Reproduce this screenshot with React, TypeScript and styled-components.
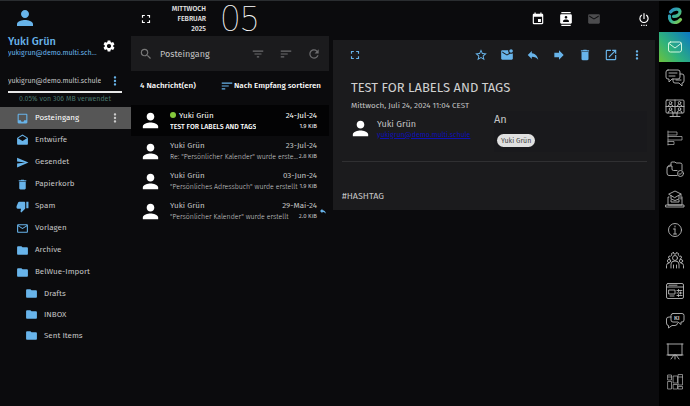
import React from "react";
import styled, { createGlobalStyle, css } from "styled-components";
import {
  MdPerson, MdSettings, MdInbox, MdDrafts, MdSend, MdDelete, MdThumbDown,
  MdMailOutline, MdFolder, MdMoreVert, MdFullscreen, MdSearch, MdFilterList,
  MdSort, MdRefresh, MdEvent, MdContacts, MdMail, MdStarBorder,
  MdMarkEmailUnread, MdReply, MdForward, MdOpenInNew, MdSettingsPower,
} from "react-icons/md";
import type { IconType } from "react-icons";

const BLUE = "#68b4ea";
const FONT = '"Fira Sans", "Noto Sans", "Open Sans", sans-serif';

const Global = createGlobalStyle`
  * { box-sizing: border-box; }
  body { margin: 0; background: #0b0b0d; color: #c4c4c4; font-family: ${FONT}; font-size: 7px; line-height: 10px; }
  button, input { font: inherit; color: inherit; }
  ul { list-style: none; margin: 0; padding: 0; }
  h1, h2, p { margin: 0; font-weight: 400; }
`;

const Page = styled.div`
  display: grid;
  grid-template-columns: 131px 1fr 31px;
  min-height: 100vh;
  border-top: 1px solid #2a2d30;
`;

const IconButton = styled.button<{ $color?: string; $size?: number }>`
  display: flex;
  align-items: center;
  justify-content: center;
  flex: none;
  padding: 0;
  border: 0;
  background: none;
  cursor: pointer;
  color: ${(p) => p.$color ?? BLUE};
  svg { width: ${(p) => p.$size ?? 14}px; height: ${(p) => p.$size ?? 14}px; }
`;

const Sidebar = styled.aside`
  min-width: 0;
`;

const Profile = styled.div`
  padding: 5px 15px 0 8px;
  color: ${BLUE};
`;

const ProfileAvatar = styled(MdPerson)`
  display: block;
  width: 24px;
  height: 24px;
  margin-left: 5px;
`;

const ProfileRow = styled.div`
  display: flex;
  align-items: center;
  justify-content: space-between;
  padding-top: 5px;
`;

const ProfileName = styled.h2`
  font-size: 11px;
  line-height: 13px;
  font-weight: 500;
`;

const Ellipsis = styled.span`
  display: block;
  min-width: 0;
  overflow: hidden;
  white-space: nowrap;
  text-overflow: ellipsis;
`;

const ProfileMail = styled(Ellipsis)`
  width: 89px;
  line-height: 9px;
`;

const Account = styled.div`
  padding: 16px 9px 0 8px;
`;

const AccountRow = styled.div`
  display: flex;
  align-items: center;
  justify-content: space-between;
  height: 16px;
`;

const Quota = styled.div`
  margin-top: 2px;
  border-top: 2px solid #e8e8e8;
  padding-top: 1px;
  text-align: center;
  color: #4a756c;
`;

const FolderList = styled.ul`
  padding-top: 3px;
`;

const FolderItem = styled.li<{ $active?: boolean; $nested?: boolean }>`
  display: flex;
  align-items: center;
  height: ${(p) => (p.$nested ? 21 : 22)}px;
  padding: 0 9px 0 ${(p) => (p.$nested ? 25 : 16)}px;
  ${(p) => p.$active && css`background: #565656; color: #fff;`}
`;

const FolderLink = styled.a`
  display: flex;
  flex: 1;
  align-items: center;
  gap: 6px;
  color: inherit;
  font-size: 8px;
  text-decoration: none;
  svg { width: 13px; height: 13px; color: ${BLUE}; }
`;

const Main = styled.main`
  display: flex;
  flex-direction: column;
  min-width: 0;
`;

const TopBar = styled.header`
  display: flex;
  align-items: center;
  height: 35px;
  padding: 0 8px;
`;

const DateText = styled.div`
  width: 53px;
  text-align: right;
  font-weight: 500;
  color: #e4e4e4;
`;

const DayNumber = styled.div`
  margin-left: 14px;
  font-size: 38px;
  line-height: 35px;
  font-weight: 100;
  color: #fff;
`;

const TopActions = styled.nav`
  display: flex;
  gap: 14px;
  margin-left: auto;
`;

const PowerButton = styled(IconButton)`
  margin-left: 36px;
`;

const Columns = styled.div`
  display: grid;
  grid-template-columns: 198px 1fr;
  gap: 4px;
  padding-right: 4px;
  flex: 1;
`;

const SearchBar = styled.form`
  display: flex;
  align-items: center;
  height: 35px;
  padding: 0 8px;
  background: #1b1b1d;
`;

const SearchInput = styled.input`
  flex: 1;
  min-width: 0;
  margin-left: 7px;
  padding: 0;
  border: 0;
  outline: 0;
  background: none;
  font-size: 9px;
`;

const SearchActions = styled.div`
  display: flex;
  gap: 14px;
`;

const ListHead = styled.div`
  display: flex;
  align-items: center;
  justify-content: space-between;
  height: 30px;
  margin-bottom: 4px;
  padding: 0 8px 0 9px;
  color: #fff;
  font-size: 8px;
  font-weight: 500;
`;

const SortButton = styled.button`
  display: flex;
  align-items: center;
  padding: 0;
  border: 0;
  background: none;
  svg { width: 14px; height: 14px; color: ${BLUE}; }
`;

const Message = styled.li<{ $selected?: boolean }>`
  display: grid;
  grid-template-columns: 19px 1fr 12px;
  align-items: center;
  height: ${(p) => (p.$selected ? 31 : 30)}px;
  padding-left: 10px;
  ${(p) => p.$selected && css`background: #030304; color: #fff;`}
`;

const Avatar = styled(MdPerson)`
  flex: none;
  width: 23px;
  height: 23px;
  margin: 0 -2px;
  color: #fff;
`;

const MessageBody = styled.div`
  min-width: 0;
  padding-left: 10px;
`;

const MessageLine = styled.div`
  display: flex;
  align-items: center;
  justify-content: space-between;
  font-size: 8px;
  line-height: 11px;
  white-space: nowrap;
`;

const MessageSubject = styled(Ellipsis)<{ $selected?: boolean }>`
  font-size: 7px;
  font-weight: ${(p) => (p.$selected ? 500 : 300)};
  color: ${(p) => (p.$selected ? "#fff" : "#d6d6d6")};
`;

const MessageSize = styled.span`
  flex: none;
  font-size: 6px;
`;

const Sender = styled.span`
  display: flex;
  align-items: center;
  gap: 3px;
`;

const NewDot = styled.span`
  width: 6px;
  height: 6px;
  border-radius: 50%;
  background: #84c83c;
`;

const Replied = styled(MdReply)`
  width: 8px;
  height: 8px;
  justify-self: center;
  color: ${BLUE};
`;

const Reader = styled.article`
  align-self: start;
  margin-top: 4px;
  padding: 0 8px 7px 9px;
  background: #1b1b1d;
`;

const ReaderTools = styled.div`
  display: flex;
  align-items: center;
  gap: 12px;
  height: 30px;
  padding: 0 3px 0 6px;
`;

const Spacer = styled.span`
  flex: 1;
`;

const Subject = styled.h1`
  padding: 9px 9px 0;
  font-size: 13px;
  line-height: 17px;
  color: #d0d0d0;
`;

const SentAt = styled.p`
  padding: 5px 9px 0;
  font-size: 8px;
`;

const People = styled.div`
  display: grid;
  grid-template-columns: 143px 1fr;
  padding-left: 9px;
`;

const From = styled.div`
  display: flex;
  align-items: center;
  gap: 7px;
  height: 35px;
`;

const FromName = styled.div`
  font-size: 9px;
  line-height: 12px;
`;

const MailLink = styled.a`
  display: block;
  line-height: 10px;
  color: #1010b4;
`;

const To = styled.div`
  height: 41px;
  padding: 1px 0 0;
  background: #19191c;
`;

const ToLabel = styled.div`
  font-size: 11px;
  line-height: 16px;
`;

const Chip = styled.span`
  display: inline-block;
  margin: 6px 3px;
  padding: 0 4px;
  border-radius: 7px;
  background: #e0e0e0;
  color: #444;
  line-height: 13px;
`;

const Divider = styled.hr`
  width: 100%;
  height: 1px;
  margin: 9px 0 0;
  border: 0;
  background: #303032;
`;

const MailBody = styled.p`
  padding-top: 28px;
  font-size: 9px;
  line-height: 13px;
`;

const Rail = styled.nav`
  display: flex;
  flex-direction: column;
  padding-bottom: 9px;
  background: #000;
`;

const Logo = styled.svg`
  width: 16px;
  height: 18px;
  margin: 6px auto 7px;
`;

const RailList = styled.ul`
  display: grid;
  flex: 1;
  grid-auto-rows: 1fr;
`;

const RailLink = styled.a<{ $active?: boolean }>`
  display: flex;
  height: 100%;
  align-items: center;
  justify-content: center;
  color: #b8b8b8;
  ${(p) => p.$active && css`background: linear-gradient(50deg, #6cc23c 0%, #2fb27c 40%, #0b77c4 100%); color: #e4ffe8;`}
  svg { width: 20px; height: 20px; }
`;

const folders: { name: string; icon: IconType; active?: boolean; nested?: boolean }[] = [
  { name: "Posteingang", icon: MdInbox, active: true },
  { name: "Entwürfe", icon: MdDrafts },
  { name: "Gesendet", icon: MdSend },
  { name: "Papierkorb", icon: MdDelete },
  { name: "Spam", icon: MdThumbDown },
  { name: "Vorlagen", icon: MdMailOutline },
  { name: "Archive", icon: MdFolder },
  { name: "BelWue-Import", icon: MdFolder },
  { name: "Drafts", icon: MdFolder, nested: true },
  { name: "INBOX", icon: MdFolder, nested: true },
  { name: "Sent Items", icon: MdFolder, nested: true },
];

const messages = [
  { subject: "TEST FOR LABELS AND TAGS", date: "24-Jul-24", size: "1.9 KiB", selected: true },
  { subject: 'Re: "Persönlicher Kalender" wurde erstellt', date: "23-Jul-24", size: "2.8 KiB" },
  { subject: '"Persönliches Adressbuch" wurde erstellt', date: "03-Jun-24", size: "1.9 KiB" },
  { subject: '"Persönlicher Kalender" wurde erstellt', date: "29-Mai-24", size: "2.0 KiB", replied: true },
];

const readerActions: { label: string; icon: IconType }[] = [
  { label: "Markieren", icon: MdStarBorder },
  { label: "Als ungelesen markieren", icon: MdMarkEmailUnread },
  { label: "Antworten", icon: MdReply },
  { label: "Weiterleiten", icon: MdForward },
  { label: "Löschen", icon: MdDelete },
  { label: "In neuem Fenster öffnen", icon: MdOpenInNew },
  { label: "Mehr", icon: MdMoreVert },
];

const apps: { label: string; art: React.ReactNode }[] = [
  { label: "E-Mail", art: <><rect x="3.500" y="5" width="13" height="10" rx="2" /><path d="M4 6.500 10 11l6-4.500" /></> },
  { label: "Chat", art: <><path d="M3 2h10q2 0 2 2v5q0 2-2 2H7l-3 3v-3H3q-2 0-2-2V4q0-2 2-2zM4 5h8M4 8h6" /><path d="M15 6h2q2 0 2 2v5q0 2-2 2v3l-3-3h-4q-2 0-2-2v-2M11 12h5" /></> },
  { label: "Videokonferenz", art: <><rect x="1" y="2" width="18" height="13" rx="1" /><path d="M10 2v13M1 8.500h18M8 15v3M12 15v3M5 18.500h10M3 8.500q0-2 2.500-2t2.500 2M12 8.500q0-2 2.500-2t2.500 2M3 15q0-2.500 2.500-2.500T8 15M12 15q0-2.500 2.500-2.500T17 15" /><circle cx="5.500" cy="4.800" r="1.300" /><circle cx="14.500" cy="4.800" r="1.300" /><circle cx="5.500" cy="11" r="1.300" /><circle cx="14.500" cy="11" r="1.300" /></> },
  { label: "Planung", art: <path d="M3 3v14M3 4h9v3H3M3 8.500h14V12H3M3 13.500h6v3H3" strokeWidth="0.700" /> },
  { label: "Dateien", art: <><path d="M6 6V4q0-1 1-1h3l1 1h4q2 0 2 1.500V11" /><path d="M6 6q-4 0-4 4v4q0 2.500 2 2.500h8M2.500 8.500q1-1.500 3-1.500H7v3q0 1.500 1.500 1.500H12" /><circle cx="15.500" cy="14.500" r="3" /><path d="m14 14.500 1 1 2-2" /></> },
  { label: "Lernplattform", art: <><path d="m4 5 6-3 6 3-6 3.500zM6 6.500V10q4 3 8 0V6.500M16 5v5M4 8H3v8h14V8M1 16h18v2H1zM6 11v2h8v-2" /></> },
  { label: "Information", art: <><circle cx="10" cy="10" r="6.500" /><path d="M10 9v5M8.500 9H10M8.500 14h3M10 6v1" /></> },
  { label: "Gruppen", art: <><circle cx="10" cy="8" r="2.500" /><path d="m8.500 2.500.500 1.500h2l.500-1.500 2 1-.300 1.500 1.300 1.300 1.500-.300.500 2-1.500 1M8.500 2.500l-2 1 .300 1.500L5.500 6.300 4 6l-.500 2L5 9M6 18v-4q0-3 4-3t4 3v4" /><circle cx="4" cy="11" r="1.600" /><circle cx="16" cy="11" r="1.600" /><path d="M1.500 18v-2.500q0-2.500 2.500-2.500M18.500 18v-2.500q0-2.500-2.500-2.500M8.500 15v3M11.500 15v3" /></> },
  { label: "Fernzugriff", art: <><rect x="1.500" y="2.500" width="17" height="15" rx="1.500" /><path d="M1.500 6h17M4 4.200h8M4 9h6v4H4zM5 15h4M12 9.500h5M12 12h5M12 14.500h5M13.500 8.500v2M15.500 11v2M13.500 13.500v2" /></> },
  { label: "KI", art: <><path d="M8 2.500h9q2 0 2 2V9q0 2-2 2h-1v2.500L13 11H8q-2 0-2-2V4.500q0-2 2-2z" /><path d="M6 6H4Q1.500 6 1.500 8v4q0 2.500 2 2.500V17l3.500-2.500h3q2 0 2.500-2" /><text x="9" y="9" fontSize="6" fontWeight="700" fill="currentColor" stroke="none">KI</text></> },
  { label: "Tafel", art: <path d="M2 3h16M3 3v11h14V3M2 14h16M10 14v4M9 14l-3 4M11 14l3 4" /> },
  { label: "Schließfächer", art: <path d="M3 3h3.500v5H3zM3 9.500h3.500V17H3zM8.500 4h4v7h-4zM8.500 12.500h4V17h-4zM13.500 2.500h4V13h-4zM13.500 14.500h4V17h-4zM3 5h3.500M13.500 5h4" strokeWidth="0.700" /> },
];

export default function App() {
  return (
    <>
      <Global />
      <Page>
        <Sidebar>
          <Profile>
            <ProfileAvatar />
            <ProfileRow>
              <div>
                <ProfileName>Yuki Grün</ProfileName>
                <ProfileMail>yukigrun@demo.multi.schule</ProfileMail>
              </div>
              <IconButton $color="#fff" aria-label="Einstellungen"><MdSettings /></IconButton>
            </ProfileRow>
          </Profile>
          <Account>
            <AccountRow>
              <Ellipsis>yukigrun@demo.multi.schule</Ellipsis>
              <IconButton aria-label="Kontomenü"><MdMoreVert /></IconButton>
            </AccountRow>
            <Quota>0.05% von 306 MB verwendet</Quota>
          </Account>
          <FolderList>
            {folders.map(({ name, icon: Icon, active, nested }) => (
              <FolderItem key={name} $active={active} $nested={nested}>
                <FolderLink href="#"><Icon />{name}</FolderLink>
                {active && <IconButton $color="#ccc" aria-label="Ordnermenü"><MdMoreVert /></IconButton>}
              </FolderItem>
            ))}
          </FolderList>
        </Sidebar>

        <Main>
          <TopBar>
            <IconButton $color="#fff" aria-label="Vollbild"><MdFullscreen /></IconButton>
            <DateText>MITTWOCH<br />FEBRUAR<br />2025</DateText>
            <DayNumber>05</DayNumber>
            <TopActions>
              <IconButton $color="#fff" aria-label="Kalender"><MdEvent /></IconButton>
              <IconButton $color="#fff" aria-label="Kontakte"><MdContacts /></IconButton>
              <IconButton $color="#4c4c4e" aria-label="E-Mail"><MdMail /></IconButton>
            </TopActions>
            <PowerButton $color="#fff" aria-label="Abmelden"><MdSettingsPower /></PowerButton>
          </TopBar>

          <Columns>
            <section>
              <SearchBar>
                <IconButton as="span" $color="#777"><MdSearch /></IconButton>
                <SearchInput aria-label="Suche" defaultValue="Posteingang" />
                <SearchActions>
                  <IconButton type="button" $color="#6c6c6e" aria-label="Filtern"><MdFilterList /></IconButton>
                  <IconButton type="button" $color="#6c6c6e" aria-label="Sortieren"><MdSort /></IconButton>
                  <IconButton type="button" $color="#6c6c6e" aria-label="Aktualisieren"><MdRefresh /></IconButton>
                </SearchActions>
              </SearchBar>
              <ListHead>
                <span>4 Nachricht(en)</span>
                <SortButton><MdSort />Nach Empfang sortieren</SortButton>
              </ListHead>
              <ul>
                {messages.map((m) => (
                  <Message key={m.date} $selected={m.selected}>
                    <Avatar />
                    <MessageBody>
                      <MessageLine>
                        <Sender>{m.selected && <NewDot />}Yuki Grün</Sender>
                        <span>{m.date}</span>
                      </MessageLine>
                      <MessageLine>
                        <MessageSubject $selected={m.selected}>{m.subject}</MessageSubject>
                        <MessageSize>{m.size}</MessageSize>
                      </MessageLine>
                    </MessageBody>
                    {m.replied && <Replied />}
                  </Message>
                ))}
              </ul>
            </section>

            <Reader>
              <ReaderTools>
                <IconButton aria-label="Maximieren"><MdFullscreen /></IconButton>
                <Spacer />
                {readerActions.map(({ label, icon: Icon }) => (
                  <IconButton key={label} aria-label={label}><Icon /></IconButton>
                ))}
              </ReaderTools>
              <Subject>TEST FOR LABELS AND TAGS</Subject>
              <SentAt>Mittwoch, Juli 24, 2024 11:04 CEST</SentAt>
              <People>
                <From>
                  <Avatar />
                  <div>
                    <FromName>Yuki Grün</FromName>
                    <MailLink href="mailto:yukigrun@demo.multi.schule">yukigrun@demo.multi.schule</MailLink>
                  </div>
                </From>
                <To>
                  <ToLabel>An</ToLabel>
                  <Chip>Yuki Grün</Chip>
                </To>
              </People>
              <Divider />
              <MailBody>#HASHTAG</MailBody>
            </Reader>
          </Columns>
        </Main>

        <Rail>
          <Logo viewBox="0 0 16 18" fill="none" stroke="url(#brand)" strokeWidth="3.200" strokeLinecap="round">
            <defs>
              <linearGradient id="brand" x1="0" y1="0" x2="1" y2="1">
                <stop offset="0" stopColor="#2a86c8" />
                <stop offset="0.500" stopColor="#35b39a" />
                <stop offset="1" stopColor="#86cc48" />
              </linearGradient>
            </defs>
            <path d="M3.500 5C6 1.500 12.500 0.800 13 4.500 13.300 7.500 10 9.500 6.500 9.300M2.500 9C2 13 4.500 15.500 7.500 15.500 10 15.500 12 14.500 13.500 12.500" />
          </Logo>
          <RailList>
            {apps.map(({ label, art }, i) => (
              <li key={label}>
                <RailLink href="#" $active={i === 0} aria-label={label}>
                  <svg viewBox="0 0 20 20" fill="none" stroke="currentColor" strokeWidth="0.900" strokeLinejoin="round" strokeLinecap="round">{art}</svg>
                </RailLink>
              </li>
            ))}
          </RailList>
        </Rail>
      </Page>
    </>
  );
}
